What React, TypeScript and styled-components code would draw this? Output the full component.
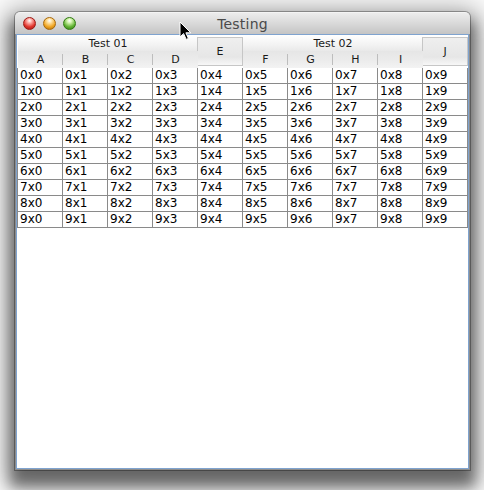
import React from "react"
import styled, { createGlobalStyle } from "styled-components"

const GlobalStyle = createGlobalStyle`
  html, body {
    margin: 0;
    padding: 0;
    background: #ffffff;
  }
  body {
    width: 484px;
    height: 490px;
    overflow: hidden;
    font-family: "DejaVu Sans", "Liberation Sans", sans-serif;
  }
`

const groups = [
    { title: "Test 01", cols: ["A", "B", "C", "D"], single: "E" },
    { title: "Test 02", cols: ["F", "G", "H", "I"], single: "J" },
]

const rows = Array.from({ length: 10 }, (_, r) => Array.from({ length: 10 }, (_, c) => `${r}x${c}`))

export default function App() {
    return (
        <>
            <GlobalStyle />
            <Desktop>
                <Window>
                    <TitleBar>
                        <Lights>
                            <Light $c1="#ffb3ad" $c2="#e0342c" $c3="#9c1a14" />
                            <Light $c1="#ffe3a6" $c2="#f0a521" $c3="#a8690b" />
                            <Light $c1="#d4f5b0" $c2="#62b333" $c3="#317a12" />
                        </Lights>
                        <Title>Testing</Title>
                    </TitleBar>
                    <Content>
                        <Header>
                            {groups.map((g, gi) => (
                                <React.Fragment key={g.title}>
                                    <GroupCell style={{ gridColumn: `${gi * 5 + 1} / span 4` }}>{g.title}</GroupCell>
                                    <TallCell style={{ gridColumn: `${gi * 5 + 5}` }}>{g.single}</TallCell>
                                    {g.cols.map((c, ci) => (
                                        <ColCell key={c} $first={ci === 0} style={{ gridColumn: `${gi * 5 + ci + 1}` }}>{c}</ColCell>
                                    ))}
                                </React.Fragment>
                            ))}
                        </Header>
                        <Grid>
                            {rows.map((r, ri) => (
                                <Row key={ri}>
                                    {r.map((v) => (
                                        <Cell key={v}>{v}</Cell>
                                    ))}
                                </Row>
                            ))}
                        </Grid>
                    </Content>
                </Window>
                <Cursor width="13" height="20" viewBox="0 0 13 20">
                    <path d="M1 1 L1 16 L4.6 12.6 L7.2 18.4 L9.4 17.4 L6.9 11.8 L11.8 11.8 Z" fill="#000" stroke="#fff" strokeWidth="1" strokeLinejoin="round" />
                </Cursor>
            </Desktop>
        </>
    )
}

const Desktop = styled.div`
  position: relative;
  width: 484px;
  height: 490px;
  padding: 12px 0 0 15px;
  box-sizing: border-box;
`

const Window = styled.div`
  width: 455px;
  height: 458px;
  display: flex;
  flex-direction: column;
  border-radius: 5px 5px 0 0;
  background: #8d8d8d;
  box-shadow:
    0 0 0 1px rgba(0, 0, 0, 0.3),
    0 12px 14px 5px rgba(0, 0, 0, 0.45),
    0 6px 28px 12px rgba(0, 0, 0, 0.3);
`

const TitleBar = styled.div`
  position: relative;
  height: 22px;
  flex: none;
  display: flex;
  align-items: center;
  justify-content: center;
  border-radius: 5px 5px 0 0;
  background: linear-gradient(#ececec, #d9d9d9 50%, #c4c4c4);
  border-top: 1px solid #f4f4f4;
  box-sizing: border-box;
`

const Lights = styled.div`
  position: absolute;
  left: 8px;
  top: 4px;
  display: flex;
  gap: 7px;
`

const Light = styled.span<{ $c1: string; $c2: string; $c3: string }>`
  width: 13px;
  height: 13px;
  border-radius: 50%;
  box-sizing: border-box;
  border: 1px solid ${(p) => p.$c3};
  background: radial-gradient(circle at 50% 25%, #ffffff 0, ${(p) => p.$c1} 22%, ${(p) => p.$c2} 62%, ${(p) => p.$c3} 100%);
`

const Title = styled.span`
  font-size: 14px;
  color: #4a4a4a;
  letter-spacing: 0.2px;
  margin-top: 1px;
`

const Content = styled.div`
  flex: 1;
  margin: 0 1px 1px;
  border: 1px solid #7fa3cf;
  background: #ffffff;
`

const Header = styled.div`
  display: grid;
  grid-template-columns: repeat(10, 45px);
  grid-template-rows: 16px 17px;
  margin-left: 1px;
  font-size: 11px;
  color: #1a1a1a;
`

const GroupCell = styled.div`
  grid-row: 1;
  display: flex;
  align-items: center;
  justify-content: center;
  background: linear-gradient(#ffffff, #f3f3f3 60%, #e9e9e9);
`

const ColCell = styled.div<{ $first: boolean }>`
  grid-row: 2;
  position: relative;
  display: flex;
  align-items: center;
  justify-content: center;
  background: linear-gradient(#e6e6e6, #ebebeb 50%, #f3f3f3);
  &::before {
    content: "";
    display: ${(p) => (p.$first ? "none" : "block")};
    position: absolute;
    left: -1px;
    top: 3px;
    bottom: 3px;
    width: 1px;
    background: #bdbdbd;
  }
`

const TallCell = styled.div`
  grid-row: 1 / span 2;
  display: flex;
  align-items: center;
  justify-content: center;
  margin: 2px 0 2px -1px;
  border: 1px solid #c6c6c6;
  background: linear-gradient(#efefef, #e6e6e6 70%, #f7f7f7);
`

const Grid = styled.div`
  display: flex;
  flex-direction: column;
  width: 451px;
`

const Row = styled.div`
  display: flex;
  border-left: 1px solid #8a8a8a;
`

const Cell = styled.div`
  width: 45px;
  height: 16px;
  box-sizing: border-box;
  border-right: 1px solid #8a8a8a;
  border-bottom: 1px solid #8a8a8a;
  padding-left: 2px;
  font-size: 12px;
  line-height: 15px;
  color: #000;
`

const Cursor = styled.svg`
  position: absolute;
  left: 179px;
  top: 21px;
`
